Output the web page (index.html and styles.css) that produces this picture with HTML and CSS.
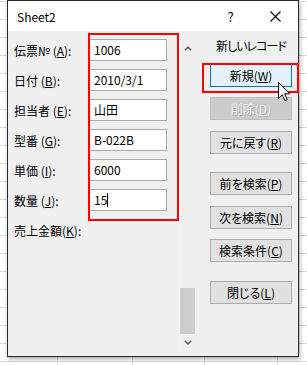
FILE: index.html
```html
<!DOCTYPE html>
<html lang="ja">
<head>
    <meta charset="UTF-8">
    <title>Sheet2</title>
    <link rel="stylesheet" href="styles.css">
</head>
<body>
    <div class="dialog">
        <div class="titlebar">
            <span class="title">Sheet2</span>
            <span class="tb-btn">?</span>
            <span class="tb-btn">
                <svg width="11" height="11" viewBox="0 0 11 11"><path d="M0.5 0.5L10.5 10.5M10.5 0.5L0.5 10.5" stroke="#000" stroke-width="1.1" fill="none"/></svg>
            </span>
        </div>

        <div class="body">
            <!-- 入力欄 -->
            <div class="form">
                <label>伝票№ (<u>A</u>):</label><div class="field">1006</div>
                <label>日付 (<u>B</u>):</label><div class="field">2010/3/1</div>
                <label>担当者 (<u>E</u>):</label><div class="field">山田</div>
                <label>型番 (<u>G</u>):</label><div class="field">B-022B</div>
                <label>単価 (<u>I</u>):</label><div class="field">6000</div>
                <label>数量 (<u>J</u>):</label><div class="field">15<span class="caret"></span></div>
                <label class="wide">売上金額(<u>K</u>):</label>
            </div>

            <!-- スクロールバー -->
            <div class="scroll">
                <div class="arrow">
                    <svg width="8" height="5" viewBox="0 0 8 5"><path d="M0.8 4.3L4 1.2L7.2 4.3" stroke="#606060" stroke-width="1.6" fill="none"/></svg>
                </div>
                <div class="track"><div class="thumb"></div></div>
                <div class="arrow">
                    <svg width="8" height="5" viewBox="0 0 8 5"><path d="M0.8 0.7L4 3.8L7.2 0.7" stroke="#606060" stroke-width="1.6" fill="none"/></svg>
                </div>
            </div>

            <!-- ボタン -->
            <div class="side">
                <div class="caption">新しいレコード</div>
                <button class="hover">新規(<u>W</u>)</button>
                <button disabled>削除(<u>D</u>)</button>
                <button>元に戻す(<u>R</u>)</button>
                <button class="sep">前を検索(<u>P</u>)</button>
                <button>次を検索(<u>N</u>)</button>
                <button>検索条件(<u>C</u>)</button>
                <button class="sep">閉じる(<u>L</u>)</button>
            </div>
        </div>
    </div>

    <!-- 注記の赤枠とカーソル -->
    <div class="mark mark-fields"></div>
    <div class="mark mark-new"></div>
    <svg class="cursor" width="13" height="20" viewBox="0 0 13 20">
        <path d="M0.5 0.5L0.5 16.5L4.3 12.8L6.8 18.6L9.2 17.6L6.7 11.8L11.8 11.8Z" fill="#fff" stroke="#000" stroke-width="1"/>
    </svg>
</body>
</html>
```

FILE: styles.css
```css
* {
    box-sizing: border-box;
}
body {
    margin: 0;
    width: 307px;
    height: 365px;
    overflow: hidden;
    position: relative;
    font-family: "Noto Sans CJK JP", "Noto Sans", sans-serif;
    font-size: 12px;
    font-feature-settings: "palt";
    color: #000;
    background-color: #fff;
    background-image:
        linear-gradient(#dadada, #dadada),
        linear-gradient(#dadada, #dadada),
        linear-gradient(#dadada, #dadada),
        linear-gradient(#dadada, #dadada),
        repeating-linear-gradient(to bottom, #dadada 0 1px, transparent 1px 18px);
    background-size: 1px 100%, 1px 100%, 1px 100%, 1px 100%, 100% 100%;
    background-position: 57px 0, 132px 0, 204px 0, 277px 0, 0 1px;
    background-repeat: no-repeat;
}
.dialog {
    margin-left: 7px;
    width: 292px;
    height: 357px;
    border: 1px solid #2a2a2a;
    background: #f0f0f0;
    box-shadow: 1px 2px 4px rgba(0, 0, 0, 0.35);
    display: flex;
    flex-direction: column;
}
.titlebar {
    height: 30px;
    background: #fff;
    display: flex;
    align-items: center;
    padding-left: 9px;
}
.title {
    flex: 1;
    font-size: 12px;
}
.tb-btn {
    width: 45px;
    height: 30px;
    display: flex;
    align-items: center;
    justify-content: center;
    font-size: 13px;
}
.body {
    flex: 1;
    display: flex;
}
.form {
    width: 171px;
    padding: 8px 0 0 6px;
    display: grid;
    grid-template-columns: 75px 78px;
    grid-auto-rows: 22px;
    row-gap: 8px;
    align-items: center;
    align-content: start;
}
.form label {
    white-space: nowrap;
}
.form label.wide {
    grid-column: 1 / 3;
}
.field {
    height: 22px;
    background: #fff;
    border: 1px solid #ababab;
    padding-left: 4px;
    line-height: 20px;
}
.caret {
    display: inline-block;
    width: 1px;
    height: 14px;
    background: #000;
    vertical-align: -2px;
}
.scroll {
    width: 17px;
    margin-top: 9px;
    height: 311px;
    border-left: 1px solid #fff;
    display: flex;
    flex-direction: column;
}
.arrow {
    height: 17px;
    display: flex;
    align-items: center;
    justify-content: center;
}
.track {
    flex: 1;
    display: flex;
    flex-direction: column;
    justify-content: flex-end;
}
.thumb {
    height: 46px;
    margin-right: 1px;
    background: #cdcdcd;
}
.side {
    width: 102px;
    padding: 7px 0 0 14px;
    display: flex;
    flex-direction: column;
    gap: 10.5px;
}
.caption {
    width: 82px;
    text-align: center;
    white-space: nowrap;
    letter-spacing: -1px;
    line-height: 16px;
    margin-bottom: -1px;
}
button {
    width: 82px;
    height: 23px;
    padding: 0;
    font-family: inherit;
    font-size: 12px;
    font-feature-settings: "palt";
    color: #000;
    background: #e1e1e1;
    border: 1px solid #adadad;
}
button.hover {
    background: #e5f1fb;
    border-color: #0078d7;
}
button:disabled {
    background: #cccccc;
    border-color: #bfbfbf;
    color: #f2f2f2;
    text-shadow: 0.6px 0.6px 0 #a8a8a8;
}
button.sep {
    margin-top: 8px;
}
.mark {
    position: absolute;
    border: 2px solid #ff0000;
}
.mark-fields {
    left: 88px;
    top: 33px;
    width: 91px;
    height: 188px;
}
.mark-new {
    left: 202px;
    top: 63px;
    width: 97px;
    height: 30px;
}
.cursor {
    position: absolute;
    left: 278px;
    top: 82px;
}
```
